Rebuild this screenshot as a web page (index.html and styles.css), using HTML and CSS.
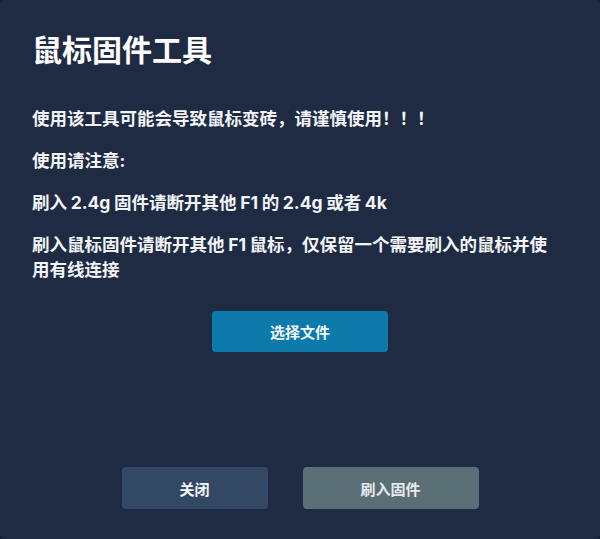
FILE: index.html
```html
<!DOCTYPE html>
<html lang="zh-CN">
<head>
<meta charset="utf-8">
<title>鼠标固件工具</title>
<link rel="stylesheet" href="styles.css">
</head>
<body>
<div class="dialog">
  <h1 class="title">鼠标固件工具</h1>
  <div class="content">
    <p class="line">使用该工具可能会导致鼠标变砖，请谨慎使用！！！</p>
    <p class="line">使用请注意:</p>
    <p class="line">刷入 2.4g 固件请断开其他 F1 的 2.4g 或者 4k</p>
    <p class="line">刷入鼠标固件请断开其他 F1 鼠标，仅保留一个需要刷入的鼠标并使用有线连接</p>
  </div>
  <div class="pick-row">
    <button class="btn btn-pick">选择文件</button>
  </div>
  <div class="footer">
    <button class="btn btn-close">关闭</button>
    <button class="btn btn-flash">刷入固件</button>
  </div>
</div>
</body>
</html>
```
FILE: styles.css
```css
html, body {
  margin: 0;
  padding: 0;
  background: #111a2a;
}
body {
  font-family: "Inter", "Noto Sans CJK SC", "Noto Sans", sans-serif;
  color: #f2f4f7;
}
.dialog {
  box-sizing: border-box;
  width: 600px;
  height: 539px;
  background: #1e2b43;
  border-radius: 4px;
  padding: 30px 32px 30px;
  display: flex;
  flex-direction: column;
}
.title {
  margin: 0;
  font-size: 30px;
  line-height: 40px;
  font-weight: 700;
  color: #ffffff;
}
.content {
  margin-top: 36px;
  margin-right: 8px;
}
.line {
  margin: 0 0 17px;
  font-size: 17.5px;
  line-height: 25px;
  font-weight: 700;
  word-spacing: -0.5px;
  color: #f2f4f7;
}
.line:last-child {
  margin-bottom: 0;
}
.pick-row {
  display: flex;
  justify-content: center;
  margin-top: 29px;
}
.btn {
  border: none;
  border-radius: 4px;
  font-family: "Noto Sans CJK SC", sans-serif;
  font-size: 15px;
  font-weight: 700;
  color: #f4f6f8;
  padding: 0;
  cursor: pointer;
}
.btn-pick {
  width: 176px;
  height: 41px;
  background: #0c7bac;
}
.footer {
  margin-top: auto;
  display: flex;
  justify-content: center;
  gap: 35px;
}
.btn-close {
  width: 146px;
  height: 42px;
  background: #334865;
}
.btn-flash {
  width: 176px;
  height: 42px;
  background: #5a6e75;
  color: #e6e9eb;
}
```
